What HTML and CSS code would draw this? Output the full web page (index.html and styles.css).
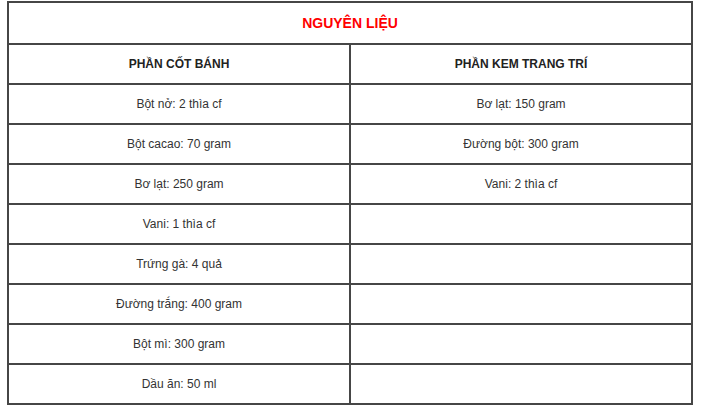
FILE: index.html
```html
<!DOCTYPE html>
<html lang="vi">
<head>
<meta charset="utf-8">
<link rel="stylesheet" href="styles.css">
</head>
<body>
<table class="recipe">
  <tr class="title-row"><td colspan="2" class="title">NGUYÊN LIỆU</td></tr>
  <tr class="head-row"><td class="head">PHẦN CỐT BÁNH</td><td class="head">PHẦN KEM TRANG TRÍ</td></tr>
  <tr><td>Bột nở: 2 thìa cf</td><td>Bơ lạt: 150 gram</td></tr>
  <tr><td>Bột cacao: 70 gram</td><td>Đường bột: 300 gram</td></tr>
  <tr><td>Bơ lạt: 250 gram</td><td>Vani: 2 thìa cf</td></tr>
  <tr><td>Vani: 1 thìa cf</td><td></td></tr>
  <tr><td>Trứng gà: 4 quả</td><td></td></tr>
  <tr><td>Đường trắng: 400 gram</td><td></td></tr>
  <tr><td>Bột mì: 300 gram</td><td></td></tr>
  <tr><td>Dầu ăn: 50 ml</td><td></td></tr>
</table>
</body>
</html>
```
FILE: styles.css
```css
html, body {
  margin: 0;
  padding: 0;
  background: #ffffff;
}
body {
  padding: 1px 0 0 7px;
  font-family: "Liberation Sans", Arial, sans-serif;
  font-size: 12px;
  color: #333333;
}
.recipe {
  border-collapse: separate;
  border-spacing: 0;
  width: 686px;
  border-top: 2px solid #464646;
  border-left: 2px solid #464646;
  table-layout: fixed;
}
.recipe td {
  border-right: 2px solid #464646;
  border-bottom: 2px solid #464646;
  padding: 0;
  height: 38px;
  text-align: center;
  vertical-align: middle;
  width: 340px;
}
.recipe td.title {
  height: 40px;
  color: #ff0000;
  font-weight: bold;
  font-size: 14px;
}
.recipe td.head {
  font-weight: bold;
  color: #222222;
}
```
